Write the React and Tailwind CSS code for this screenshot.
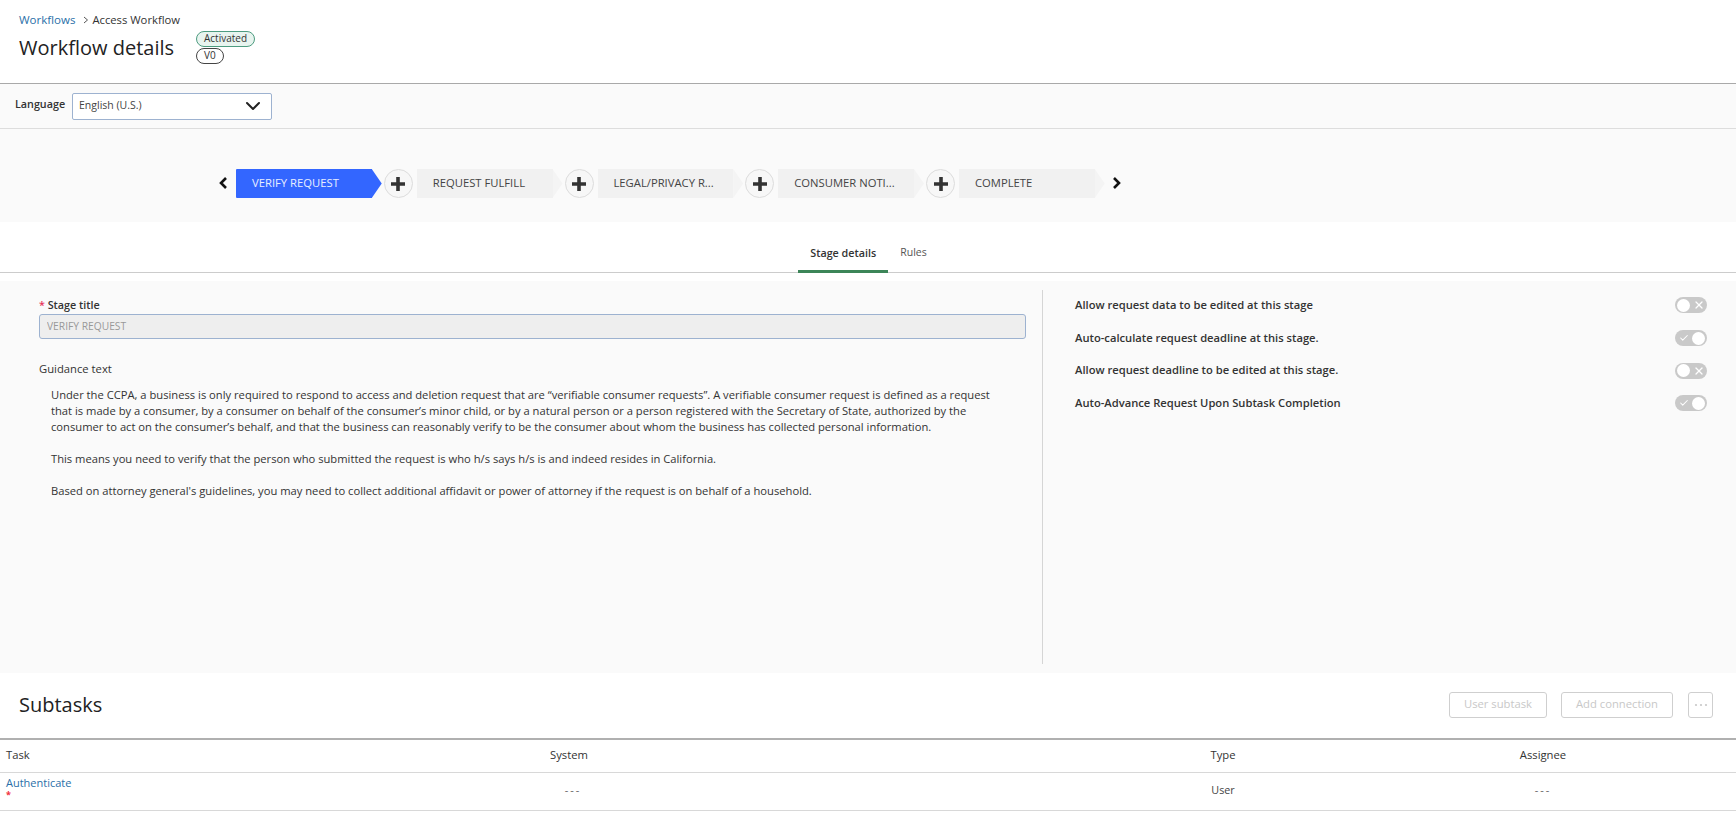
import React from "react";
import { ChevronDown, Check, X } from "lucide-react";

const F = "font-['Open_Sans',sans-serif]";

function Plus() {
  return (
    <div className="w-[29px] h-[29px] shrink-0 -translate-x-px rounded-full border border-[#dcdcdc] bg-[#f7f7f7] flex items-center justify-center">
      <svg width="16" height="16" viewBox="0 0 16 16">
        <path d="M6.2 1h3.6v5.2H15v3.6H9.8V15H6.2V9.8H1V6.2h5.2z" fill="#333" />
      </svg>
    </div>
  );
}

function Step({ label, active }) {
  return (
    <div className="flex h-[29px] w-[145.75px] shrink-0">
      <div className={`flex-1 flex items-center pl-4 text-[11.25px] whitespace-nowrap ${active ? "bg-[#3366ff] text-[#e8eeff] rounded-l-[1px]" : "bg-[#f1f1f1] text-[#444]"}`}>
        {label}
      </div>
      <div className={`w-[10px] [clip-path:polygon(0_0,100%_50%,0_100%)] ${active ? "bg-[#3366ff]" : "bg-[#f4f4f4]"}`} />
    </div>
  );
}

function Chevron({ dir }) {
  return (
    <svg width="10" height="14" viewBox="0 0 10 14" className="shrink-0 -mt-[2px]">
      <path d={dir === "left" ? "M8 2 L3 7 L8 12" : "M2 2 L7 7 L2 12"} fill="none" stroke="#111" strokeWidth="2.6" />
    </svg>
  );
}

function Toggle({ on }) {
  return (
    <div className={`w-8 h-4 rounded-full bg-[#c9c9c9] flex items-center justify-between px-[2px] shrink-0 ${on ? "" : "flex-row-reverse"}`}>
      {on ? <Check size={10} color="#fff" strokeWidth={2.5} className="ml-[2px]" /> : <X size={12} color="#fff" strokeWidth={2.5} />}
      <div className="w-[13px] h-[13px] rounded-full bg-white" />
    </div>
  );
}

function Setting({ label, on }) {
  return (
    <div className="flex items-center justify-between h-[32.7px]">
      <span className="text-[11.2px] font-semibold text-[#333]">{label}</span>
      <Toggle on={on} />
    </div>
  );
}

function GhostButton({ children, className }) {
  return (
    <button className={`h-[26px] border border-[#cfcfcf] rounded-[3px] text-[11.25px] font-medium text-[#c8c8c8] flex items-center justify-center bg-white ${className}`}>
      {children}
    </button>
  );
}

export default function App() {
  return (
    <div className={`${F} w-[1736px] h-[829px] bg-white overflow-hidden text-[#333]`}>
      <header className="h-[84px] border-b border-[#a9a9a9] pl-[19px] pt-[12px] flex flex-col">
        <div className="flex items-center text-[11.25px] leading-[16px] h-4">
          <a className="text-[#2a6fa8] font-medium text-[11.5px]">Workflows</a>
          <svg width="6" height="8" viewBox="0 0 6 8" className="ml-[8px] mr-[3px]">
            <path d="M1 1l3.5 3L1 7" fill="none" stroke="#555" strokeWidth="1" />
          </svg>
          <span className="text-[#333]">Access Workflow</span>
        </div>
        <div className="flex items-start mt-[3px]">
          <h1 className="text-[20px] leading-[30px] font-medium text-[#222] w-[177px] mt-[2px]">Workflow details</h1>
          <div className="flex flex-col items-start gap-px">
            <span className="h-4 px-[7px] rounded-full border border-[#4d9c80] bg-[#e8f4ef] text-[10px] leading-[13px] text-[#333]">Activated</span>
            <span className="h-4 px-[7px] rounded-full border border-[#444] bg-white text-[10px] leading-[13px] text-[#333]">V0</span>
          </div>
        </div>
      </header>

      <div className="h-[45px] bg-[#fafafa] border-b border-[#dddddd] flex items-center pl-[15px]">
        <span className="text-[10.75px] font-semibold text-[#333] w-[57px] -mt-[4px]">Language</span>
        <div className="w-[200px] h-[27px] bg-white border border-[#9db2d0] rounded-[2px] flex items-center justify-between pl-[6px] pr-[6px] text-[10.5px] text-[#444]">
          <span>English (U.S.)</span>
          <ChevronDown size={24} strokeWidth={2} color="#222" />
        </div>
      </div>

      <div className="h-[93px] bg-[#fafafa] flex items-center gap-[3px] pl-[218px] pt-[16px]">
        <Chevron dir="left" />
        <div className="w-[2px]" />
        <Step label="VERIFY REQUEST" active />
        <Plus />
        <Step label="REQUEST FULFILL" />
        <Plus />
        <Step label="LEGAL/PRIVACY R..." />
        <Plus />
        <Step label="CONSUMER NOTI..." />
        <Plus />
        <Step label="COMPLETE" />
        <div className="w-px" />
        <Chevron dir="right" />
      </div>

      <nav className="h-[51px] border-b border-[#cccccc] flex justify-center items-end pl-[2px]">
        <div className="h-[51px] w-[90px] flex items-center justify-center border-b-[3px] border-[#3c8558] text-[10.75px] font-semibold text-[#333] -mb-px pt-[14px]">Stage details</div>
        <div className="h-[51px] pl-[12px] pr-[13px] flex items-center border-b-[3px] border-transparent text-[10.5px] text-[#555] -mb-px pt-[14px]">Rules</div>
      </nav>

      <section className="mt-2 h-[392px] bg-[#fafafa] flex py-[9px]">
        <div className="w-[1043px] border-r border-[#d5d5d5] pl-[39px] pr-[16px]">
          <label className="block text-[10.75px] font-semibold leading-4 pt-[7px] text-[#333]">
            <span className="text-[#e8335a]">* </span>Stage title
          </label>
          <input
            readOnly
            value="VERIFY REQUEST"
            className="block mt-px w-full h-[25px] bg-[#eeeeee] border border-[#9db2d0] rounded-[3px] px-[7px] pb-[2px] text-[10.25px] text-[#999] outline-none"
          />
          <div className="mt-[22px] text-[11.25px] leading-4 text-[#333]">Guidance text</div>
          <div className="mt-[10px] pl-[12px] pr-[20px] text-[11.2px] leading-[16.2px] text-[#333] flex flex-col gap-[15.6px]">
            <p>Under the CCPA, a business is only required to respond to access and deletion request that are “verifiable consumer requests”. A verifiable consumer request is defined as a request that is made by a consumer, by a consumer on behalf of the consumer’s minor child, or by a natural person or a person registered with the Secretary of State, authorized by the consumer to act on the consumer’s behalf, and that the business can reasonably verify to be the consumer about whom the business has collected personal information.</p>
            <p>This means you need to verify that the person who submitted the request is who h/s says h/s is and indeed resides in California.</p>
            <p>Based on attorney general's guidelines, you may need to collect additional affidavit or power of attorney if the request is on behalf of a household.</p>
          </div>
        </div>
        <div className="flex-1 pl-[32px] pr-[29px] -mt-px">
          <Setting label="Allow request data to be edited at this stage" on={false} />
          <Setting label="Auto-calculate request deadline at this stage." on />
          <Setting label="Allow request deadline to be edited at this stage." on={false} />
          <Setting label="Auto-Advance Request Upon Subtask Completion" on />
        </div>
      </section>

      <div className="h-[67px] flex items-center pl-[19px] pr-[23px] pb-[2px] border-b-2 border-[#b0b0b0]">
        <h2 className="text-[20px] font-medium text-[#222] flex-1">Subtasks</h2>
        <GhostButton className="w-[98px] mr-[14px]">User subtask</GhostButton>
        <GhostButton className="w-[112px] mr-[15px]">Add connection</GhostButton>
        <GhostButton className="w-[25px]">
          <svg width="14" height="4" viewBox="0 0 14 4"><circle cx="2" cy="2" r="1.1" fill="#c8c8c8" /><circle cx="7" cy="2" r="1.1" fill="#c8c8c8" /><circle cx="12" cy="2" r="1.1" fill="#c8c8c8" /></svg>
        </GhostButton>
      </div>

      <div className="grid grid-cols-[104px_930px_378px_262px_1fr] h-[33px] items-center text-[11.25px] font-medium border-b border-[#d8d8d8] text-[#333] pb-[2px]">
        <div className="pl-[6px] font-normal">Task</div>
        <div className="text-center">System</div>
        <div className="text-center">Type</div>
        <div className="text-center">Assignee</div>
        <div />
      </div>
      <div className="grid grid-cols-[104px_930px_378px_262px_1fr] h-[38px] items-center text-[11px] border-b border-[#d8d8d8] text-[#666] pb-[2px]">
        <div className="pl-[6px] flex flex-col self-start pt-[2px]">
          <a className="text-[#2a6fa8] font-medium text-[11px] leading-[16px] whitespace-nowrap">Authenticate</a>
          <span className="text-[#f0303f] text-[9px] leading-[8px] font-bold">*</span>
        </div>
        <div className="text-center tracking-[2px] pl-[8px]">---</div>
        <div className="text-center text-[10.75px] text-[#444]">User</div>
        <div className="text-center tracking-[2px]">---</div>
        <div />
      </div>
    </div>
  );
}
